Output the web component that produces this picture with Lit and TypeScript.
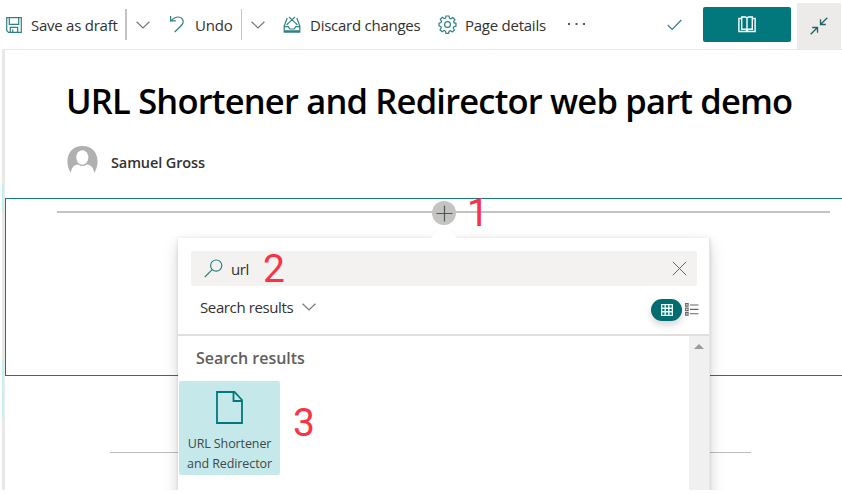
import { LitElement, html, css } from "lit";
import { customElement } from "lit/decorators.js";

@customElement("app-root")
export class AppRoot extends LitElement {
  static styles = css`
    :host {
      display: block;
      width: 842px;
      height: 494px;
      overflow: hidden;
      background: #fff;
      color: #323130;
      font-family: "Open Sans", "Noto Sans", sans-serif;
    }
    * { box-sizing: border-box; }
    svg { display: block; flex: none; fill: none; stroke: #2f8184; stroke-width: 1.2; }
    .screen { height: 490px; overflow: hidden; display: flex; flex-direction: column; }
    .bar {
      height: 50px;
      flex: none;
      display: flex;
      align-items: center;
      margin-left: 2px;
      border-bottom: 1px solid #e9e8e7;
      font-size: 15px;
      line-height: 20px;
      white-space: nowrap;
      padding-left: 3px;
    }
    .bar .chev, .picker .chev { stroke: #777; }
    .label { flex: none; }
    .save { width: 87px; margin-left: 8px; letter-spacing: -0.25px; }
    .undo { width: 37px; margin-left: 9px; letter-spacing: -0.15px; }
    .discard { width: 110px; margin-left: 9px; letter-spacing: -0.25px; }
    .details { width: 81px; margin-left: 8px; letter-spacing: -0.25px; }
    .sep { width: 1px; height: 31px; background: #c4c3c2; flex: none; }
    .sep.first { width: 2px; margin-left: 7px; margin-right: 9px; }
    .sep.second { margin-left: 9px; margin-right: 9px; }
    .undo-icon { margin-left: 19px; }
    .discard-icon { margin-left: 18px; }
    .gear { margin-left: 18px; }
    .dots { margin-left: 21px; }
    .check { margin-left: 81px; }
    .read {
      width: 88px;
      height: 35px;
      margin-left: 21px;
      border-radius: 2px;
      background: #03787c;
      display: flex;
      align-items: center;
      justify-content: center;
    }
    .read svg { stroke: #fff; }
    .collapse {
      width: 44px;
      height: 46px;
      margin-left: 6px;
      align-self: flex-end;
      background: #edebe9;
      display: flex;
      align-items: center;
      justify-content: center;
    }
    .body { flex: 1; display: flex; min-height: 0; }
    .rail { width: 3px; margin-left: 2px; flex: none; background: #e9e8e7; padding-top: 134px; }
    .mark { width: 1px; height: 28px; background: #bdeef0; }
    .mark.mid { margin-top: 148px; }
    .mark.low { margin-top: 2px; }
    .page { flex: 1; min-width: 0; display: flex; flex-direction: column; }
    h1 {
      margin: 0;
      height: 88px;
      padding: 26px 0 0 61px;
      font-size: 34.5px;
      line-height: 50px;
      font-weight: 600;
      letter-spacing: -0.8px;
      color: #000;
      white-space: nowrap;
    }
    .author { height: 60px; padding: 8px 0 0 62px; display: flex; gap: 13px; font-size: 14.5px; font-weight: 600; line-height: 20px; }
    .name { padding-top: 7px; letter-spacing: -0.12px; }
    .section { height: 178px; border: 1px solid #147a7d; border-right: 0; position: relative; }
    .rule { height: 2px; margin: 12px 12px 0 51px; background: #c1c4c3; }
    .add {
      position: absolute;
      left: 426px;
      top: 2px;
      width: 24px;
      height: 24px;
      border-radius: 50%;
      background: #c4c3c2;
      display: flex;
      align-items: center;
      justify-content: center;
    }
    .add svg { stroke: #4b5a59; }
    .lower { height: 1px; margin: 76px 91px 0 105px; background: #bdbdbd; flex: none; }
    .num { position: absolute; font-family: Roboto, sans-serif; font-size: 39px; line-height: 40px; color: #fb3245; }
    .one { left: 461px; top: -6px; }
    .picker {
      position: absolute;
      left: 172px;
      top: 39px;
      width: 532px;
      height: 260px;
      background: #fff;
      box-shadow: 0 6px 15px rgba(0, 0, 0, 0.16), 0 1px 4px rgba(0, 0, 0, 0.13);
      display: flex;
      flex-direction: column;
      border-right: 1px solid #e6e6e6;
    }
    .beak { position: absolute; left: 253px; top: -13px; fill: #fff; stroke: none; }
    .search {
      height: 35px;
      margin: 13px 12px 0 13px;
      border-radius: 2px;
      background: #f3f2f1;
      display: flex;
      align-items: center;
      padding: 0 10px 0 13px;
      position: relative;
      font-size: 15px;
    }
    .query { margin-left: 8px; flex: 1; letter-spacing: -0.4px; }
    .two { left: 72px; top: -2px; }
    .search .x { stroke: #666; stroke-width: 1; }
    .filter { height: 50px; border-bottom: 2px solid #e0dfde; display: flex; padding: 11px 10px 0 22px; flex: none; font-size: 15px; line-height: 20px; }
    .choice { width: 95px; letter-spacing: -0.38px; white-space: nowrap; }
    .filter .chev { margin: 6px 0 0 7px; }
    .pill {
      width: 31px;
      height: 22px;
      margin: 2px 3px 0 auto;
      border-radius: 11px;
      background: #036c70;
      box-shadow: 0 4px 7px rgba(0, 0, 0, 0.16);
      display: flex;
      align-items: center;
      justify-content: center;
    }
    .list { margin-top: 6px; }
    .results { flex: 1; display: flex; position: relative; }
    .found { flex: 1; }
    .group { margin: 10px 0 0 18px; font-size: 16px; line-height: 24px; font-weight: 600; color: #605e5c; letter-spacing: -0.02px; }
    .tile {
      width: 101px;
      height: 94px;
      margin: 11px 0 0 1px;
      border-radius: 2px;
      background: #c5e9ea;
      display: flex;
      flex-direction: column;
      align-items: center;
      font-size: 12.5px;
      line-height: 19.5px;
      text-align: center;
      white-space: nowrap;
      color: #404848;
      padding-top: 10px;
    }
    .caption { margin-top: 10px; letter-spacing: -0.1px; }
    .three { left: 115px; top: 67px; }
    .scroll { width: 20px; background: #f0f0f0; padding: 8px 0 0 5px; }
    .scroll svg { fill: #9a9a9a; stroke: none; }
  `;

  private chevron() {
    return html`<svg class="chev" width="14" height="8" viewBox="0 0 14 8"><path d="M.6 .7 7 7 13.4 .7" /></svg>`;
  }

  render() {
    return html`
      <div class="screen">
        <div class="bar">
          <svg width="18" height="18" viewBox="0 0 18 18"><path d="M1.7 1.7h14.6v14.6H3.5l-1.8-1.8zM4.3 1.7v6.6h9.4V1.7M5.3 16.3v-5h7.4v5M7.7 16v-2.5" /></svg>
          <span class="label save">Save as draft</span>
          <span class="sep first"></span>${this.chevron()}
          <svg class="undo-icon" width="17" height="19" viewBox="0 0 17 19"><path d="M1.600 1v4.900h5.200M1.900 5.700C4.500 3.200 6.700 1.800 9.400 2c3.800.3 5.500 3.400 4.500 6.300-.5 1.600-3.400 4.300-8.200 8.700" /></svg>
          <span class="label undo">Undo</span>
          <span class="sep second"></span>${this.chevron()}
          <svg class="discard-icon" width="18" height="18" viewBox="0 0 18 18"><path d="M4.200 2 1.200 10v6.200h15.600V10l-3-8M1.200 10.600h4L6.800 13h4.400l1.600-2.400h4M1.200 14.900h15.600M6 1l6 5.600M12 1 6 6.600M3.600 9l2.200-2.400M14.400 9l-2.200-2.400" /></svg>
          <span class="label discard">Discard changes</span>
          <svg class="gear" width="19" height="19" viewBox="0 0 19 19"><circle cx="9.500" cy="9.500" r="2.900" /><path d="M8 1h3l.5 2.300 1.300.5 2-1.300 2.100 2.100-1.300 2 .5 1.300L18 8.300v2.900l-2.200.5-.6 1.300 1.300 2-2.100 2-1.900-1.300-1.400.6L10.700 18.300H8l-.6-2.200-1.400-.6-1.900 1.300-2.100-2 1.300-2-.6-1.300L1 10.900V8.200l2-.6.600-1.300-1.300-1.900 2-2.100 2 1.300 1.300-.5z" /></svg>
          <span class="label details">Page details</span>
          <svg class="dots" width="19" height="4" viewBox="0 0 19 4"><path d="M1 1h2M8.500 1h2M16 1h2" stroke="#555" stroke-width="2" /></svg>
          <svg class="check" width="15" height="12" viewBox="0 0 15 12"><path d="M.7 6 5.200 10.500 14.300 1" /></svg>
          <div class="read">
            <svg width="18" height="17" viewBox="0 0 18 17"><path d="M3.300 2.500H.9v13h16.200v-13h-2.400M9 2v13.500M3.700 1h4L9 2l1.300-1h4v12.300h-4L9 14.500l-1.300-1.200h-4z" stroke-width="1.400" /></svg>
          </div>
          <div class="collapse">
            <svg width="18" height="18" viewBox="0 0 18 18"><path d="M17.300.7 10.500 7.500M10.500 2.300v5.200h5.300M.7 17.300 7.500 10.500M2.200 10.500h5.300v5.300" stroke="#1e6265" stroke-width="1.300" /></svg>
          </div>
        </div>
        <div class="body">
          <div class="rail">
            <div class="mark"></div>
            <div class="mark mid"></div>
            <div class="mark low"></div>
          </div>
          <div class="page">
            <h1>URL Shortener and Redirector web part demo</h1>
            <div class="author">
              <svg width="31" height="30" viewBox="0 0 31 30" stroke="none">
                <path d="M4 27C-3 17 0 0 15.500 0S34 17 27 27c0-5-3-8-7-8.500-3 2-6 2-9 0-4 .5-7 3.500-7 8.500z" fill="#b1b0b0" stroke="none" />
                <ellipse cx="15.300" cy="11.500" rx="6" ry="7.300" fill="#fff" stroke="none" />
              </svg>
              <span class="name">Samuel Gross</span>
            </div>
            <div class="section">
              <div class="rule"></div>
              <div class="picker">
                <svg class="beak" width="26" height="14" viewBox="0 0 26 14"><path d="M13 0 26 13v1H0v-1z" /></svg>
                <div class="search">
                  <svg width="19" height="19" viewBox="0 0 19 19"><circle cx="12.200" cy="6.600" r="5.600" /><path d="M8.200 10.600.8 18" /></svg>
                  <span class="query">url</span>
                  <svg class="x" width="15" height="15" viewBox="0 0 15 15"><path d="m.8.8 13.400 13.400M14.200.8.8 14.200" /></svg>
                  <span class="num two">2</span>
                </div>
                <div class="filter">
                  <span class="choice">Search results</span>${this.chevron()}
                  <div class="pill">
                    <svg width="12" height="12" viewBox="0 0 12 12"><path d="M.6.6h10.800v10.800H.6zM4.200.6v10.800M7.800.6v10.800M.6 4.200h10.800M.6 7.800h10.800" stroke="#e8ffff" stroke-width="1.400" /></svg>
                  </div>
                  <svg class="list" width="14" height="13" viewBox="0 0 14 13"><path d="M.6.6h2.500v2.500H.6zM.6 5.100h2.500v2.500H.6zM.6 9.600h2.500v2.500H.6zM5 2h8.500M5 6.400h8.500M5 10.800h8.500" stroke="#666" stroke-width="1.100" /></svg>
                </div>
                <div class="results">
                  <div class="found">
                    <div class="group">Search results</div>
                    <div class="tile">
                      <svg width="27" height="33" viewBox="0 0 27 33"><path d="M1 1h17.500L26 9v23H1zM17.500 1v9H26" stroke="#03787c" stroke-width="1.800" /></svg>
                      <div class="caption">URL Shortener<br />and Redirector</div>
                    </div>
                  </div>
                  <div class="scroll"><svg width="10" height="5" viewBox="0 0 10 5"><path d="M5 0 10 5H0z" /></svg></div>
                  <span class="num three">3</span>
                </div>
              </div>
              <div class="add"><svg width="17" height="17" viewBox="0 0 17 17"><path d="M8.500.5v16M.5 8.500h16" /></svg></div>
              <span class="num one">1</span>
            </div>
            <div class="lower"></div>
          </div>
        </div>
      </div>
    `;
  }
}
